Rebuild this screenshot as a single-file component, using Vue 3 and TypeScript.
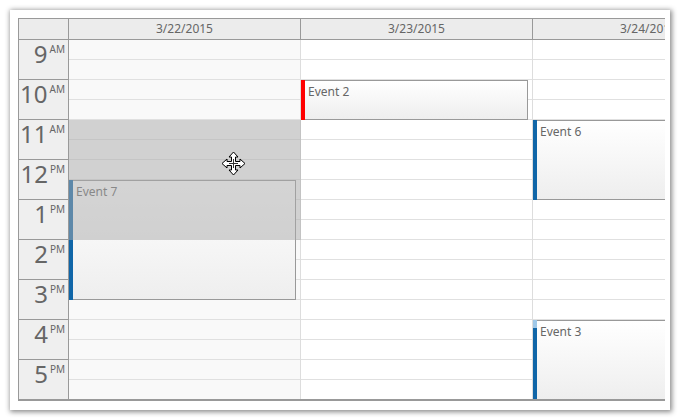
<template>
  <div class="card">
    <div class="calendar">
      <div class="head">
        <div class="corner"></div>
        <div v-for="day in days" :key="day.date" class="day-head">{{ day.date }}</div>
      </div>
      <div class="body">
        <div class="hours">
          <div v-for="h in hours" :key="h.num + h.ap" class="hour">
            <span class="num">{{ h.num }}</span>
            <span class="ap">{{ h.ap }}</span>
          </div>
        </div>
        <div v-for="(day, i) in days" :key="day.date" class="col" :class="{ off: i === 0 }">
          <div v-for="n in 18" :key="n" class="slot"></div>
          <div
            v-for="ev in day.events"
            :key="ev.name"
            class="event"
            :style="{ top: ev.top + 'px', height: ev.height + 'px' }"
          >
            <div class="bar" :style="{ background: ev.color }"></div>
            <div v-if="ev.partial" class="bar-top"></div>
            <span class="ev-text">{{ ev.name }}</span>
          </div>
          <div v-if="i === 0" class="shadow"></div>
        </div>
      </div>
      <!-- drag cursor -->
      <svg class="cursor" width="25" height="25" viewBox="0 0 25 25">
        <path
          d="M12.5 1 L17 6 L14.5 6 L14.5 10.5 L19 10.5 L19 8 L24 12.5 L19 17 L19 14.5 L14.5 14.5 L14.5 19 L17 19 L12.5 24 L8 19 L10.5 19 L10.5 14.5 L6 14.5 L6 17 L1 12.5 L6 8 L6 10.5 L10.5 10.5 L10.5 6 L8 6 Z"
          fill="#fff"
          stroke="#000"
          stroke-width="1"
        />
        <path d="M12.5 8 V17 M8 12.5 H17" stroke="#333" stroke-width="1" fill="none" />
      </svg>
    </div>
  </div>
</template>

<script setup lang="ts">
interface CalEvent {
  name: string
  top: number
  height: number
  color: string
  partial?: boolean
}

const hours = [
  { num: '9', ap: 'AM' },
  { num: '10', ap: 'AM' },
  { num: '11', ap: 'AM' },
  { num: '12', ap: 'PM' },
  { num: '1', ap: 'PM' },
  { num: '2', ap: 'PM' },
  { num: '3', ap: 'PM' },
  { num: '4', ap: 'PM' },
  { num: '5', ap: 'PM' }
]

const days: { date: string; events: CalEvent[] }[] = [
  { date: '3/22/2015', events: [{ name: 'Event 7', top: 140, height: 120, color: '#1066a8' }] },
  { date: '3/23/2015', events: [{ name: 'Event 2', top: 40, height: 40, color: '#ff0000' }] },
  {
    date: '3/24/2015',
    events: [
      { name: 'Event 6', top: 80, height: 80, color: '#1066a8' },
      { name: 'Event 3', top: 280, height: 81, color: '#1066a8', partial: true }
    ]
  }
]
</script>

<style>
html,
body {
  background: #fff;
}
</style>

<style scoped>
.card {
  box-sizing: border-box;
  width: 660px;
  height: 400px;
  margin: 10px;
  padding: 8px 0 0 8px;
  background: #fff;
  box-shadow: 1px 1px 5px 1px #8a8a8a;
  font-family: "Noto Sans", "DejaVu Sans", sans-serif;
  color: #666;
}

.calendar {
  position: relative;
  box-sizing: border-box;
  width: 647px;
  height: 383px;
  border-top: 1px solid #999;
  border-left: 1px solid #999;
  border-bottom: 2px solid #999;
  overflow: hidden;
}

.head {
  display: flex;
  height: 20px;
  background: #ececec;
  border-bottom: 1px solid #999;
}

.corner {
  flex: none;
  width: 49px;
  border-right: 1px solid #999;
}

.day-head {
  flex: none;
  width: 231px;
  border-right: 1px solid #999;
  font-size: 12px;
  line-height: 20px;
  text-align: center;
}

.body {
  display: flex;
}

.hours {
  flex: none;
  width: 49px;
  border-right: 1px solid #999;
  background: #efefef;
}

.hour {
  box-sizing: border-box;
  display: flex;
  justify-content: flex-end;
  align-items: flex-start;
  gap: 2px;
  height: 40px;
  padding-right: 3px;
  border-bottom: 1px solid #999;
}

.num {
  font-size: 24px;
  line-height: 28px;
}

.ap {
  font-size: 10px;
  line-height: 18px;
}

.col {
  position: relative;
  flex: none;
  width: 231px;
  border-right: 1px solid #ddd;
  background: #fff;
}

.col.off {
  background: #f9f9f9;
}

.slot {
  box-sizing: border-box;
  height: 20px;
  border-bottom: 1px solid #e0e0e0;
}

.event {
  position: absolute;
  left: 0;
  box-sizing: border-box;
  width: 227px;
  padding: 3px 0 0 7px;
  border: 1px solid #999;
  border-left: 0;
  background: linear-gradient(#fff, #eee);
  font-size: 12px;
  line-height: 16px;
}

.bar {
  position: absolute;
  left: 0;
  top: -1px;
  bottom: -1px;
  width: 4px;
}

.bar-top {
  position: absolute;
  left: 0;
  top: -1px;
  width: 4px;
  height: 8px;
  background: #9fc8e8;
}

.shadow {
  position: absolute;
  left: 0;
  top: 80px;
  width: 232px;
  height: 120px;
  background: rgba(170, 170, 170, 0.5);
}

.cursor {
  position: absolute;
  left: 202px;
  top: 132px;
}
</style>
